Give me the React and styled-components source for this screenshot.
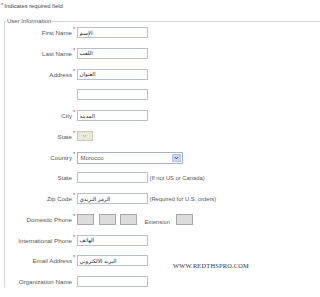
import styled, { createGlobalStyle } from "styled-components";

const Global = createGlobalStyle`
  html, body {
    margin: 0;
    background: #fff;
    overflow: hidden;
  }
  body {
    font-family: "Liberation Sans", Arial, sans-serif;
    color: #555;
  }
`;

const Page = styled.div`
  position: relative;
  width: 320px;
  height: 297px;
  overflow: hidden;
`;

const Note = styled.div`
  height: 17px;
  padding: 2px 0 0 1px;
  box-sizing: border-box;
  font-size: 5.8px;
  line-height: 8px;
  color: #444;
`;

const Star = styled.span`
  color: #e03030;
  font-size: 6px;
  vertical-align: top;
  line-height: 6px;
  margin-right: 1px;
`;

const Fieldset = styled.fieldset`
  margin: 0 0 0 4px;
  width: 340px;
  padding: 2px 0 0 0;
  border: 1px solid #d4d4d4;
  border-right: 0;
  border-bottom: 0;
  min-inline-size: 0;
`;

const Legend = styled.legend`
  font-size: 6px;
  line-height: 8px;
  padding: 0 1px;
  margin-left: 1px;
  color: #555;
`;

const Rows = styled.div`
  display: grid;
  row-gap: 9.75px;
`;

const Row = styled.div`
  display: grid;
  grid-template-columns: 67px 4.5px auto;
  align-items: center;
  height: 11px;
  font-size: 6.2px;
`;

const Label = styled.span`
  text-align: right;
  white-space: nowrap;
  color: #555;
`;

const Req = styled.span`
  color: #e03030;
  font-size: 6px;
  align-self: start;
  padding-left: 1px;
  line-height: 5px;
`;

const Field = styled.div`
  display: flex;
  align-items: center;
  gap: 2px;
  white-space: nowrap;
`;

const Input = styled.div`
  box-sizing: border-box;
  width: ${(p) => p.$w || 71}px;
  height: ${(p) => p.$h || 11}px;
  border: 1px solid #b9bfcc;
  background: ${(p) => (p.$gray ? "#dcdcdc" : "#fff")};
  border-color: ${(p) => (p.$gray ? "#a9a9a9" : "#b9bfcc")};
  display: flex;
  align-items: center;
  padding: 0 2px;
  font-family: "DejaVu Sans", sans-serif;
  font-size: 5.5px;
  color: #222;
  direction: ltr;
  margin-right: ${(p) => p.$mr || 0}px;
`;

const Arabic = styled.span`
  direction: rtl;
  unicode-bidi: isolate;
`;

const Hint = styled.span`
  color: #555;
  font-size: 5.8px;
`;

const StateSelect = styled.div`
  box-sizing: border-box;
  width: 16px;
  height: 10px;
  border: 1px solid #c9c6b5;
  background: #ebe8da;
  display: flex;
  align-items: center;
  justify-content: center;
`;

const Select = styled.div`
  box-sizing: border-box;
  width: 106px;
  height: 12px;
  border: 1px solid #a6b2cc;
  background: #fff;
  display: flex;
  align-items: center;
  justify-content: space-between;
  padding: 0 1px 0 3px;
  font-size: 6px;
  color: #555;
`;

const SelectBtn = styled.span`
  width: 9px;
  height: 8px;
  background: #c8d6f4;
  border: 1px solid #b4c4ea;
  box-sizing: border-box;
  display: flex;
  align-items: center;
  justify-content: center;
`;

const Ext = styled.span`
  margin: 0 4px 0 6px;
  font-size: 5.8px;
  color: #555;
  align-self: flex-end;
`;

const Watermark = styled.div`
  position: absolute;
  left: 173px;
  top: 262px;
  font-family: "Liberation Serif", "Times New Roman", serif;
  font-size: 6.4px;
  letter-spacing: 0.2px;
  color: #333;
`;

const Chevron = ({ color }) => (
  <svg width="5" height="4" viewBox="0 0 5 4">
    <path d="M0.8 1 L2.5 2.8 L4.2 1" fill="none" stroke={color} strokeWidth="1" />
  </svg>
);

const fields = [
  { label: "First Name", req: true, value: "الإسم" },
  { label: "Last Name", req: true, value: "اللقب" },
  { label: "Address", req: true, value: "العنوان" },
  { label: "", req: false, value: "" },
  { label: "City", req: true, value: "المدينة" },
];

export default function App() {
  return (
    <Page>
      <Global />
      <Note>
        <Star>*</Star>Indicates required field
      </Note>
      <Fieldset>
        <Legend>User Information</Legend>
        <Rows>
          {fields.map((f, i) => (
            <Row key={i}>
              <Label>{f.label}</Label>
              <Req>{f.req ? "*" : ""}</Req>
              <Field>
                <Input>
                  <Arabic>{f.value}</Arabic>
                </Input>
              </Field>
            </Row>
          ))}
          <Row>
            <Label>State</Label>
            <Req>*</Req>
            <Field>
              <StateSelect>
                <Chevron color="#b0ad9c" />
              </StateSelect>
            </Field>
          </Row>
          <Row>
            <Label>Country</Label>
            <Req>*</Req>
            <Field>
              <Select>
                Morocco
                <SelectBtn>
                  <Chevron color="#2c4a8c" />
                </SelectBtn>
              </Select>
            </Field>
          </Row>
          <Row>
            <Label>State</Label>
            <Req />
            <Field>
              <Input />
              <Hint>(If not US or Canada)</Hint>
            </Field>
          </Row>
          <Row>
            <Label>Zip Code</Label>
            <Req>*</Req>
            <Field>
              <Input>
                <Arabic>الرمز البريدي</Arabic>
              </Input>
              <Hint>(Required for U.S. orders)</Hint>
            </Field>
          </Row>
          <Row>
            <Label>Domestic Phone</Label>
            <Req>*</Req>
            <Field>
              <Input $w={17} $gray $mr={3} />
              <Input $w={17} $gray $mr={2} />
              <Input $w={17} $gray />
              <Ext>Extension</Ext>
              <Input $w={17} $gray />
            </Field>
          </Row>
          <Row>
            <Label>International Phone</Label>
            <Req>*</Req>
            <Field>
              <Input>
                <Arabic>الهاتف</Arabic>
              </Input>
            </Field>
          </Row>
          <Row>
            <Label>Email Address</Label>
            <Req>*</Req>
            <Field>
              <Input>
                <Arabic>البريد الالكتروني</Arabic>
              </Input>
            </Field>
          </Row>
          <Row>
            <Label>Organization Name</Label>
            <Req />
            <Field>
              <Input />
            </Field>
          </Row>
        </Rows>
      </Fieldset>
      <Watermark>WWW.REDTHSPRO.COM</Watermark>
    </Page>
  );
}
